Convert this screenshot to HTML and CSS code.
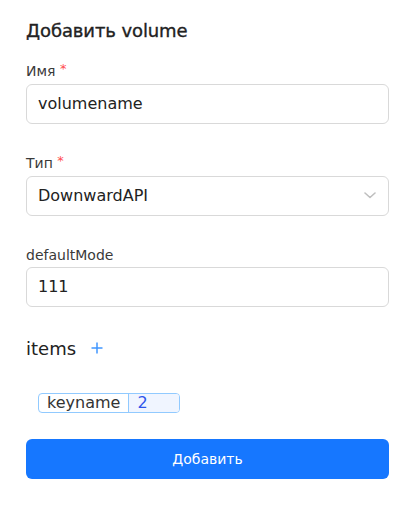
FILE: index.html
```html
<!DOCTYPE html>
<html lang="ru">
<head>
<meta charset="utf-8">
<link rel="stylesheet" href="styles.css">
</head>
<body>
<div class="panel">
  <h2 class="title">Добавить volume</h2>

  <div class="field">
    <label class="label">Имя <span class="req">*</span></label>
    <div class="input">volumename</div>
  </div>

  <div class="field">
    <label class="label">Тип <span class="req">*</span></label>
    <div class="input select">
      <span>DownwardAPI</span>
      <svg class="chev" width="12" height="7" viewBox="0 0 12 7"><path d="M1 1 L6 5.5 L11 1" fill="none" stroke="#bfbfbf" stroke-width="1.6" stroke-linecap="round" stroke-linejoin="round"/></svg>
    </div>
  </div>

  <div class="field">
    <label class="label">defaultMode</label>
    <div class="input">111</div>
  </div>

  <div class="items-head">
    <span class="items-title">items</span>
    <svg class="plus" width="12" height="12" viewBox="0 0 12 12"><path d="M6 0.5 V11.5 M0.5 6 H11.5" stroke="#4096ff" stroke-width="1.5"/></svg>
  </div>

  <div class="tags">
    <div class="tag"><span class="tag-key">keyname</span><span class="tag-val">2</span></div>
  </div>

  <button class="btn">Добавить</button>
</div>
</body>
</html>
```
FILE: styles.css
```css
* { box-sizing: border-box; }
html, body { margin: 0; padding: 0; background: #fff; }
body {
  font-family: "DejaVu Sans", "Open Sans", sans-serif;
  color: rgba(0,0,0,0.88);
}
.panel {
  padding: 17px 24px 0 26px;
  width: 413px;
}
.title {
  margin: 0 0 15px;
  font-size: 18px;
  font-weight: 400;
  -webkit-text-stroke: 0.35px #222;
  line-height: 28px;
  color: #222;
  letter-spacing: -0.1px;
}
.field { margin-bottom: 28px; }
.label {
  display: block;
  font-size: 14px;
  line-height: 22px;
  color: #3a3a3a;
  margin-bottom: 1px;
}
.req { color: #ff4d4f; font-size: 13px; position: relative; top: -3px; }
.input {
  height: 40px;
  width: 363px;
  border: 1px solid #d9d9d9;
  border-radius: 6px;
  padding: 0 11px;
  font-size: 16px;
  line-height: 38px;
  color: #222;
}
.select {
  display: flex;
  align-items: center;
  justify-content: space-between;
}
.chev { margin-right: 1px; margin-top: -2px; }
.items-head {
  display: flex;
  align-items: center;
  gap: 15px;
  margin-top: 28px;
  height: 28px;
}
.items-title {
  font-size: 18px;
  line-height: 28px;
  color: #222;
}
.plus { margin-top: -3px; }
.tags {
  padding-left: 12px;
  margin-top: 30px;
}
.tag {
  display: inline-flex;
  height: 20px;
  border: 1px solid #91caff;
  border-radius: 4px;
  overflow: hidden;
  font-size: 16px;
  line-height: 18px;
}
.tag-key {
  padding: 0 8px;
  color: #333;
  border-right: 1px solid #91caff;
}
.tag-val {
  width: 50px;
  padding: 0 8px;
  background: #f0f5ff;
  color: #2f54eb;
}
.btn {
  display: block;
  margin-top: 26px;
  width: 363px;
  height: 40px;
  border: 0;
  border-radius: 6px;
  background: #1677ff;
  color: #fff;
  font-family: inherit;
  font-size: 14px;
  cursor: pointer;
}
```
